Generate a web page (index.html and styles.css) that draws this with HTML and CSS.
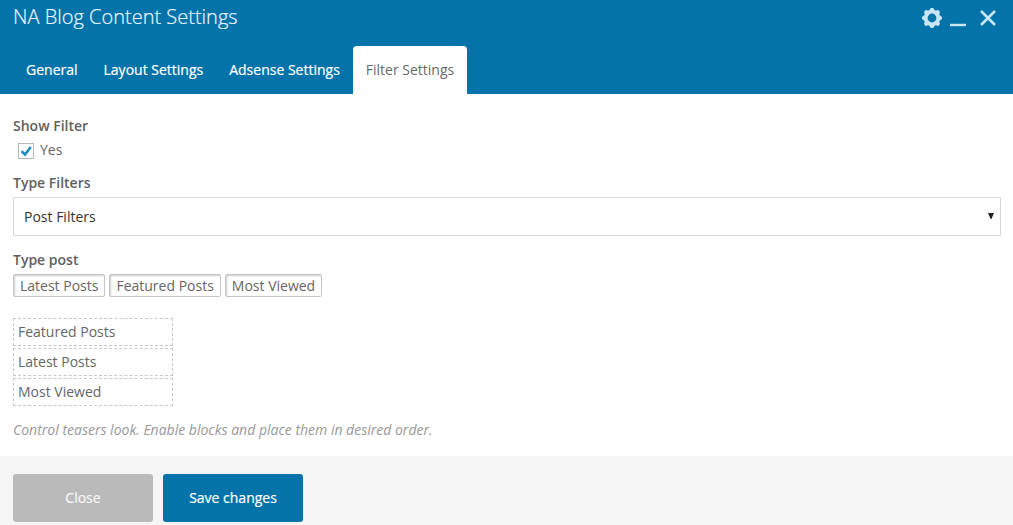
FILE: index.html
```html
<!DOCTYPE html>
<html lang="en">
<head>
<meta charset="utf-8">
<title>NA Blog Content Settings</title>
<link rel="stylesheet" href="styles.css">
</head>
<body>
<div class="panel">
  <header class="header">
    <div class="titlebar">
      <h1 class="title">NA Blog Content Settings</h1>
      <div class="controls">
        <svg class="icon-gear" viewBox="0 0 20 20" width="20" height="20"><circle cx="10" cy="10" r="6.3" fill="none" stroke="currentColor" stroke-width="3.8"/><g fill="currentColor"><path id="tooth" d="M6.8 3.6 8.2.8Q8.5 0 9.2 0h1.6q.7 0 1 .8l1.4 2.8z"/><use href="#tooth" transform="rotate(45 10 10)"/><use href="#tooth" transform="rotate(90 10 10)"/><use href="#tooth" transform="rotate(135 10 10)"/><use href="#tooth" transform="rotate(180 10 10)"/><use href="#tooth" transform="rotate(225 10 10)"/><use href="#tooth" transform="rotate(270 10 10)"/><use href="#tooth" transform="rotate(315 10 10)"/></g></svg>
        <svg class="icon-min" viewBox="0 0 16 20" width="16" height="20"><path stroke="currentColor" stroke-width="2.4" d="M0 17h16"/></svg>
        <svg class="icon-close" viewBox="0 0 16 20" width="16" height="20"><path fill="none" stroke="currentColor" stroke-width="2.6" d="M1 3l14 14M15 3 1 17"/></svg>
      </div>
    </div>
    <nav class="tabs">
      <a class="tab">General</a>
      <a class="tab">Layout Settings</a>
      <a class="tab">Adsense Settings</a>
      <a class="tab active">Filter Settings</a>
    </nav>
  </header>
  <main class="content">
    <div class="label">Show Filter</div>
    <label class="check"><span class="box"><svg viewBox="0 0 14 14" width="14" height="14"><path fill="none" stroke="#1e8cbe" stroke-width="2.6" d="M2.6 7.2 6 10.6 11.8 3"/></svg></span>Yes</label>
    <div class="label">Type Filters</div>
    <div class="select"><span>Post Filters</span><svg viewBox="0 0 6 6" width="6" height="6"><path fill="#222" d="M0 0h6L3.4 6h-.8z"/></svg></div>
    <div class="label">Type post</div>
    <div class="chips">
      <span class="chip">Latest Posts</span>
      <span class="chip">Featured Posts</span>
      <span class="chip">Most Viewed</span>
    </div>
    <ul class="blocks">
      <li>Featured Posts</li>
      <li>Latest Posts</li>
      <li>Most Viewed</li>
    </ul>
    <p class="hint">Control teasers look. Enable blocks and place them in desired order.</p>
  </main>
  <footer class="footer">
    <button class="btn">Close</button>
    <button class="btn primary">Save changes</button>
  </footer>
</div>
</body>
</html>
```
FILE: styles.css
```css
* { box-sizing: border-box; }
body { margin: 0; font: 14px/20px "Open Sans", sans-serif; color: #666; background: #fff; }
.panel { height: 525px; display: flex; flex-direction: column; overflow: hidden; }
.header { height: 94px; flex: none; background: #0473aa; color: #fff; }
.titlebar { height: 46px; display: flex; justify-content: space-between; padding: 4px 17px 0 13px; }
.title { margin: 0; font-size: 20px; line-height: 26px; font-weight: 300; color: #e8f6ff; -webkit-text-stroke: .2px #e8f6ff; }
.controls { display: flex; padding-top: 4px; color: #c8e6f6; }
.icon-min { margin-left: 8px; }
.icon-close { margin-left: 14px; }
.tabs { display: flex; padding-left: 13px; }
.tab { height: 48px; padding: 0 13px; line-height: 48px; font-size: 14px; -webkit-text-stroke: .2px #fff; }
.tab.active { background: #fff; color: #6a6a6a; border-radius: 4px 4px 0 0; -webkit-text-stroke: 0; }
.content { height: 362px; flex: none; padding: 22px 12px 0 13px; }
.label { font-weight: 600; color: #5f5f5f; }
.check { display: flex; align-items: center; height: 20px; margin: 4px 0 13px 5px; gap: 6px; }
.box { width: 16px; height: 16px; border: 1px solid #b4b9be; display: flex; align-items: center; justify-content: center; margin-top: 2px; }
.box svg { flex: none; }
.select { display: flex; align-items: center; justify-content: space-between; height: 39px; margin: 4px 0 14px; padding: 0 6px 0 10px; border: 1px solid #d6d6d6; border-radius: 1px; color: #333; }
.select svg { margin-top: -2px; }
.chips { display: flex; gap: 4px; margin-top: 4px; }
.chip { height: 23px; padding: 0 6px; line-height: 21px; border: 1px solid #c6c6c6; border-radius: 2px; box-shadow: inset 1px 1px 2px #ccc; }
.blocks { list-style: none; margin: 21px 0 0; padding: 0; display: grid; gap: 2px; width: 160px; }
.blocks li { height: 28px; padding: 0 4px; line-height: 26px; border: 1px dashed #c8c8c8; }
.hint { margin: 14px 0 0; font-style: italic; color: #999; }
.footer { flex: 1; display: flex; gap: 10px; padding: 18px 13px 0; background: #f5f5f5; }
.btn { width: 140px; height: 48px; border: 0; border-radius: 3px; background: #bababa; color: #f7f7f7; font: 400 14px "Open Sans", sans-serif; padding: 0 0 2px; -webkit-text-stroke: .2px currentColor; }
.btn.primary { background: #0473aa; color: #fff; }
```
